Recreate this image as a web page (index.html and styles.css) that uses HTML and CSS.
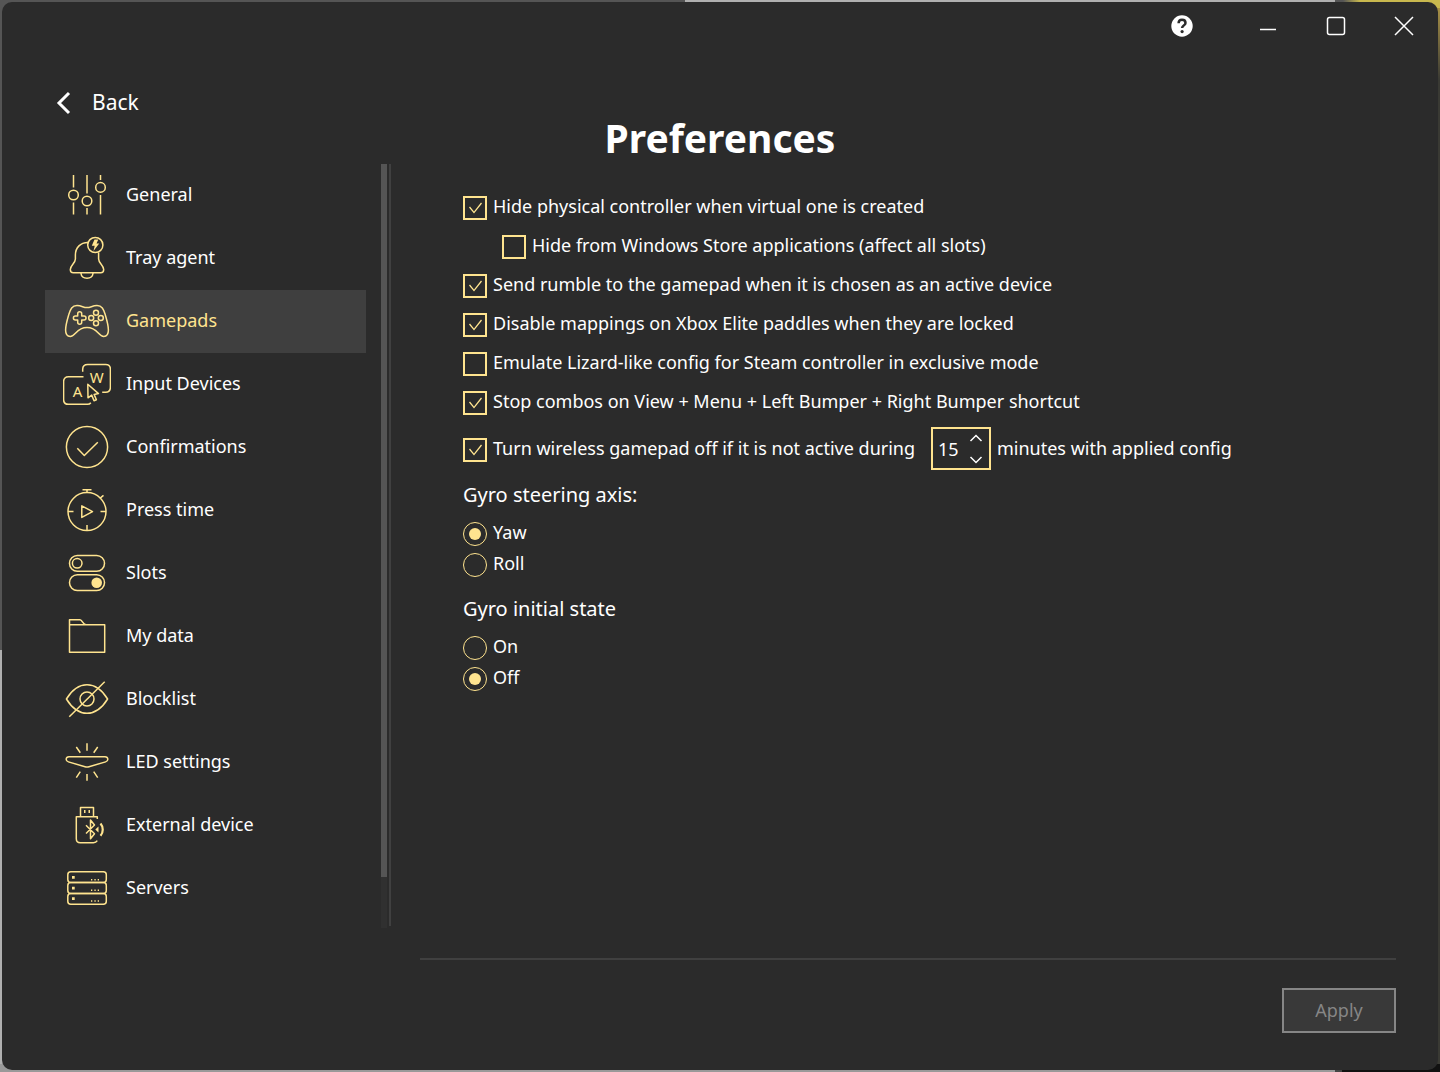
FILE: index.html
```html
<!DOCTYPE html>
<html lang="en">
<head>
  <meta charset="utf-8">
  <title>Preferences</title>
  <link rel="stylesheet" href="styles.css">
</head>
<body>
  <div class="window">
    <div class="titlebar">
      <button class="help" type="button" aria-label="Help">
        <svg width="22" height="22" viewBox="0 0 22 22"><circle cx="11" cy="11" r="10.7" fill="#fff"/><path d="M7.600 8.200C7.600 5.800 9.200 4.700 11 4.700s3.500 1.100 3.500 3.200c0 2.400-3.400 2.600-3.400 5.200" fill="none" stroke="#2b2b2b" stroke-width="2.500"/><circle cx="11.100" cy="16.600" r="1.600" fill="#2b2b2b"/></svg>
      </button>
      <button type="button" aria-label="Minimize">
        <svg width="20" height="20" viewBox="0 0 20 20"><path d="M2 13.500h16"/></svg>
      </button>
      <button type="button" aria-label="Maximize">
        <svg width="20" height="20" viewBox="0 0 20 20"><rect x="1.500" y="1.500" width="17" height="17" rx="2"/></svg>
      </button>
      <button type="button" aria-label="Close">
        <svg width="20" height="20" viewBox="0 0 20 20"><path d="M1 1l18 18M19 1L1 19"/></svg>
      </button>
    </div>

    <a class="back" href="#">
      <svg width="16" height="24" viewBox="0 0 16 24"><path d="M13 2L3 12l10 10"/></svg>
      <span>Back</span>
    </a>
    <h1>Preferences</h1>

    <div class="content">
      <div class="sidebar">
        <nav>
          <a href="#">
            <svg viewBox="0 0 48 49"><path d="M10.500 4v12.500M10.500 31.500V43.500M24 4v18.500M24 37v6.500M37.500 4v5M37.500 24v19.500"/><circle cx="10.500" cy="24" r="4.800"/><circle cx="24" cy="30" r="4.800"/><circle cx="37.500" cy="16.400" r="4.800"/></svg>
            <span>General</span>
          </a>
          <a href="#">
            <svg viewBox="0 0 48 49"><path d="M25 8.500C17 8.500 12.400 14 12.400 21v4c0 4-5.100 6.500-5.100 10.500 0 2 1.200 3.300 3 3.300h27.400c1.800 0 3-1.300 3-3.300 0-4-5.100-6.500-5.100-10.500V18.500M18 39.500c.7 6.300 11.300 6.300 12 0"/><circle cx="32.300" cy="11" r="7.600"/><path class="solid" d="M31.500 5.500h3.800l-1.800 4h2.700l-5.700 7.500 1.200-5.300h-2.900z"/></svg>
            <span>Tray agent</span>
          </a>
          <a class="active" href="#">
            <svg viewBox="0 0 48 49"><path d="M24 10.600c-4 0-5-2-10-2C9 8.600 7.500 12 5.800 17.500 4.300 22.500 2.600 28 2.600 33c0 4.500 1.800 6.400 4.600 6.400 5.800 0 5.800-8.900 16.800-8.900s11 8.900 16.800 8.900c2.800 0 4.600-1.900 4.600-6.400 0-5-1.700-10.500-3.200-15.500C40.500 12 39 8.600 34 8.600c-5 0-6 2-10 2z"/><path d="M14.700 16.700a2 2 0 0 1 4 0V19h2.300a2 2 0 0 1 0 4h-2.300v2.300a2 2 0 0 1-4 0V23h-2.300a2 2 0 0 1 0-4h2.300z"/><circle cx="33" cy="15.800" r="2.500"/><circle cx="28.200" cy="21" r="2.500"/><circle cx="37.800" cy="21" r="2.500"/><circle cx="33" cy="26.200" r="2.500"/></svg>
            <span>Gamepads</span>
          </a>
          <a href="#">
            <svg viewBox="0 0 48 49" aria-hidden="true"><path d="M19.700 11.700V9.300c0-3 2-4.800 5-4.800h18c3 0 4.700 1.800 4.700 4.800v18c0 3-1.700 4.900-4.700 4.900h-3.500M20.500 16.700H5.500c-3 0-4.900 1.800-4.900 4.800v18c0 3 1.900 4.800 4.900 4.800h19c1.500 0 2.500-.5 3.300-1.600"/><path d="M24.800 24.300l.2 13.500 3.700-2.700 2.300 5.600 2.400-1-2.300-5.300 4.400-.8z"/><text x="14.500" y="36.500">A</text><text x="33.700" y="23.300">W</text></svg>
            <span>Input Devices</span>
          </a>
          <a href="#">
            <svg viewBox="0 0 48 49"><circle cx="24" cy="24" r="20.600"/><path d="M14.300 25.300l7 7.200 13.500-13.200"/></svg>
            <span>Confirmations</span>
          </a>
          <a href="#">
            <svg viewBox="0 0 48 49"><circle cx="24" cy="25.600" r="19"/><path d="M19.500 3.700h9M24 3.700v3M36.800 12.300l3.700-3M5 25.600h5.500M37.500 25.600H43M24 39v5.500M18.800 19.800v11.600l10.700-5.800z"/></svg>
            <span>Press time</span>
          </a>
          <a href="#">
            <svg viewBox="0 0 48 49"><rect x="6.500" y="6.500" width="35" height="15.700" rx="7.800"/><circle cx="14.200" cy="14.300" r="4.800"/><rect x="6.500" y="25.800" width="35" height="15.700" rx="7.800"/><circle class="solid" cx="33.700" cy="33.700" r="5.300"/></svg>
            <span>Slots</span>
          </a>
          <a href="#">
            <svg viewBox="0 0 48 49"><path d="M6.500 12.700h35.200v27.600H6.500V7.800H17c2.500 0 2.500 4.900 6 4.900"/></svg>
            <span>My data</span>
          </a>
          <a href="#">
            <svg viewBox="0 0 48 49"><path d="M3.400 24C15 5 33 5 44.600 24 33 43 15 43 3.400 24z"/><circle cx="24" cy="24" r="7"/><path d="M41.700 6.700L6.300 41.700"/></svg>
            <span>Blocklist</span>
          </a>
          <a href="#">
            <svg viewBox="0 0 48 49"><path d="M6 18.700h36c3.500 0 3.800 4.300.6 5.200L26 28.700c-1.500.5-2.500.5-4 0L5.400 23.900C2.200 23 2.500 18.700 6 18.700zM24 5.300v7.400M13.300 9l4 5.700M34.700 9l-4 5.700M24 36v6.700M17.300 33.700l-4 6M30.700 33.700l4 6"/></svg>
            <span>LED settings</span>
          </a>
          <a href="#">
            <svg viewBox="0 0 48 49"><path d="M17.500 15.500v-9h13v9M34.300 18v-2.300h-21v22c0 2.500 1.500 4 4 4h13.200c1.800 0 3-.8 3.800-2M23 24.300l8.500 8.500-4 5V19l4 5-8.500 8.500"/><path class="wave" d="M37.500 22.500c3 3.500 3 8.800 0 12.300"/><path class="solid" d="M21 9h1.500v3H21zM25.500 9H27v3h-1.500zM35.500 25.500v6L32.300 28.500z"/></svg>
            <span>External device</span>
          </a>
          <a href="#">
            <svg viewBox="0 0 48 49"><rect x="4.800" y="7.800" width="38.500" height="10.800" rx="3"/><rect x="4.800" y="18.600" width="38.500" height="10.800" rx="3"/><rect x="4.800" y="29.400" width="38.500" height="10.800" rx="3"/><path class="solid" d="M9 12h2.700v2.700H9zM9 22.700h2.700v2.700H9zM9 33.300h2.700V36H9z"/><path d="M28 15.700h1.300M31.400 15.700h1.300M34.700 15.700H36M28 26.300h1.300M31.400 26.300h1.300M34.700 26.300H36M28 37h1.300M31.400 37h1.300M34.700 37H36"/></svg>
            <span>Servers</span>
          </a>
        </nav>
        <div class="scrollbar"><div class="thumb"></div></div>
        <div class="divider"></div>
      </div>

      <main>
        <form id="gamepads-form">
          <label class="option"><input type="checkbox" checked> Hide physical controller when virtual one is created</label>
          <label class="option nested"><input type="checkbox"> Hide from Windows Store applications (affect all slots)</label>
          <label class="option"><input type="checkbox" checked> Send rumble to the gamepad when it is chosen as an active device</label>
          <label class="option"><input type="checkbox" checked> Disable mappings on Xbox Elite paddles when they are locked</label>
          <label class="option"><input type="checkbox"> Emulate Lizard-like config for Steam controller in exclusive mode</label>
          <label class="option"><input type="checkbox" checked> Stop combos on View + Menu + Left Bumper + Right Bumper shortcut</label>
          <div class="timeout">
            <label class="option"><input type="checkbox" checked> Turn wireless gamepad off if it is not active during</label>
            <div class="spinner">
              <input type="number" id="minutes" value="15" min="1">
              <div class="arrows">
                <button type="button" id="more" aria-label="More"><svg width="14" height="8" viewBox="0 0 14 8"><path d="M1.500 7L7 1.500 12.500 7"/></svg></button>
                <button type="button" id="less" aria-label="Less"><svg width="14" height="8" viewBox="0 0 14 8"><path d="M1.500 1L7 6.500 12.500 1"/></svg></button>
              </div>
            </div>
            <label for="minutes">minutes with applied config</label>
          </div>

          <fieldset>
            <legend>Gyro steering axis:</legend>
            <label class="option"><input type="radio" name="axis" checked> Yaw</label>
            <label class="option"><input type="radio" name="axis"> Roll</label>
          </fieldset>
          <fieldset>
            <legend>Gyro initial state</legend>
            <label class="option"><input type="radio" name="state"> On</label>
            <label class="option"><input type="radio" name="state" checked> Off</label>
          </fieldset>
        </form>
      </main>
    </div>

    <footer>
      <button class="apply" type="submit" form="gamepads-form" disabled>Apply</button>
    </footer>
  </div>
  <script>
    const minutes = document.getElementById('minutes');
    document.getElementById('more').addEventListener('click', () => minutes.stepUp());
    document.getElementById('less').addEventListener('click', () => minutes.stepDown());
  </script>
</body>
</html>
```

FILE: styles.css
```css
* {
  box-sizing: border-box;
}
body {
  margin: 0;
  min-height: 100vh;
  padding: 2px;
  display: flex;
  font-family: "Noto Sans", "Open Sans", sans-serif;
  font-size: 18px;
  color: #fff;
  /* strips of the desktop behind the window */
  background:
    linear-gradient(90deg, #555 0 685px, #b0b0b0 685px 1335px, #555 1335px 1343px, #c8b84e 1360px) top / 100% 8px no-repeat,
    linear-gradient(90deg, #999 0 1335px, #444 1335px 1342px, #111 1342px) bottom / 100% 8px no-repeat,
    linear-gradient(#555 0 650px, #b0b0b0 650px) left / 8px 100% no-repeat,
    linear-gradient(#b49a48, #3a3a34 80px) right / 8px 100% no-repeat;
}
button {
  padding: 0;
  border: none;
  background: none;
  font: inherit;
  color: inherit;
}
a {
  color: inherit;
  text-decoration: none;
}
svg {
  display: block;
  flex: none;
  fill: none;
  stroke: #fff;
}
.window {
  flex: 1;
  display: flex;
  flex-direction: column;
  border-radius: 10px;
  background-color: #2b2b2b;
}
.titlebar {
  display: flex;
  justify-content: flex-end;
  height: 48px;
}
.titlebar button {
  display: flex;
  align-items: center;
  justify-content: center;
  width: 68px;
}
.titlebar .help {
  margin-right: 18px;
}
.titlebar svg {
  stroke-width: 1.5;
}
.help svg {
  stroke: none;
}
.back {
  display: flex;
  align-items: center;
  align-self: flex-start;
  gap: 20px;
  height: 30px;
  margin: 38px 0 0 54px;
  font-size: 21px;
}
.back span {
  padding-bottom: 2px;
}
.back svg {
  stroke-width: 3;
}
h1 {
  margin: 0 0 6px;
  line-height: 40px;
  font-size: 39px;
  font-weight: bold;
  text-align: center;
}
.content {
  flex: 1;
  display: flex;
}

/* Sidebar */
.sidebar {
  display: flex;
  width: 346px;
  margin-left: 43px;
}
nav {
  flex: 1;
  margin-right: 15px;
}
nav a {
  display: flex;
  align-items: center;
  gap: 15px;
  height: 63px;
  padding: 0 0 0 18px;
}
nav span {
  padding-bottom: 4px;
}
nav .active {
  background-color: #3f3f3f;
  color: #ffe48f;
}
nav svg {
  width: 48px;
  height: 49px;
  stroke: #ffe48f;
  stroke-width: 1.5;
  stroke-linejoin: round;
}
nav .solid {
  fill: #ffe48f;
  stroke: none;
}
nav .wave {
  stroke-width: 2.2;
}
nav text {
  font-size: 15px;
  fill: #ffe48f;
  stroke: none;
  text-anchor: middle;
}
.scrollbar {
  width: 6px;
  height: 764px;
  margin-right: 2px;
  background-color: #303030;
}
.thumb {
  height: 713px;
  background-color: #555;
}
.divider {
  width: 2px;
  height: 762px;
  background-color: #404040;
}

/* Options */
main {
  flex: 1;
  padding: 22px 40px 0 72px;
}
.option {
  display: flex;
  align-items: center;
  gap: 6px;
  height: 39px;
}
.nested {
  margin-left: 39px;
}
.option input {
  appearance: none;
  flex: none;
  display: grid;
  place-items: center;
  width: 24px;
  height: 24px;
  margin: 4px 0 0;
  border: 2px solid #ffe48f;
}
.option input[type="checkbox"]:checked::before {
  content: "";
  width: 16px;
  height: 16px;
  background-color: #ffe48f;
  clip-path: polygon(2px 8px, 3px 7px, 7px 12px, 14px 3px, 15px 4px, 7px 14px);
}
.option input[type="radio"] {
  border-width: 1px;
  border-radius: 50%;
}
.option input[type="radio"]:checked::before {
  content: "";
  width: 12px;
  height: 12px;
  border-radius: 50%;
  background-color: #ffe48f;
}
.timeout {
  display: flex;
  align-items: center;
  gap: 6px;
  height: 43px;
  margin: 7px 0 8px;
}
.timeout label {
  margin-bottom: 2px;
}
.timeout .option {
  min-width: 462px;
}
.spinner {
  display: flex;
  width: 60px;
  height: 43px;
  border: 2px solid #ffe48f;
}
.spinner input {
  appearance: textfield;
  width: 36px;
  padding: 0 0 0 5px;
  border: none;
  background: none;
  font: inherit;
  color: inherit;
}
.spinner input::-webkit-inner-spin-button {
  display: none;
}
.arrows {
  display: flex;
  flex-direction: column;
  justify-content: space-between;
  padding: 5px 0 4px;
}
.arrows svg {
  stroke-width: 1.5;
}
fieldset {
  margin: 0 0 14px;
  padding: 0;
  border: none;
}
legend {
  padding: 0;
  margin-bottom: 4px;
  line-height: 34px;
  font-size: 20px;
}
fieldset .option {
  height: 31px;
}

/* Footer */
footer {
  display: flex;
  justify-content: flex-end;
  height: 112px;
  margin: 0 42px 0 418px;
  padding-top: 28px;
  border-top: 2px solid #404040;
}
.apply {
  width: 114px;
  height: 45px;
  padding-bottom: 2px;
  border: 2px solid #868686;
  background-color: #393939;
  color: #868686;
}
```
